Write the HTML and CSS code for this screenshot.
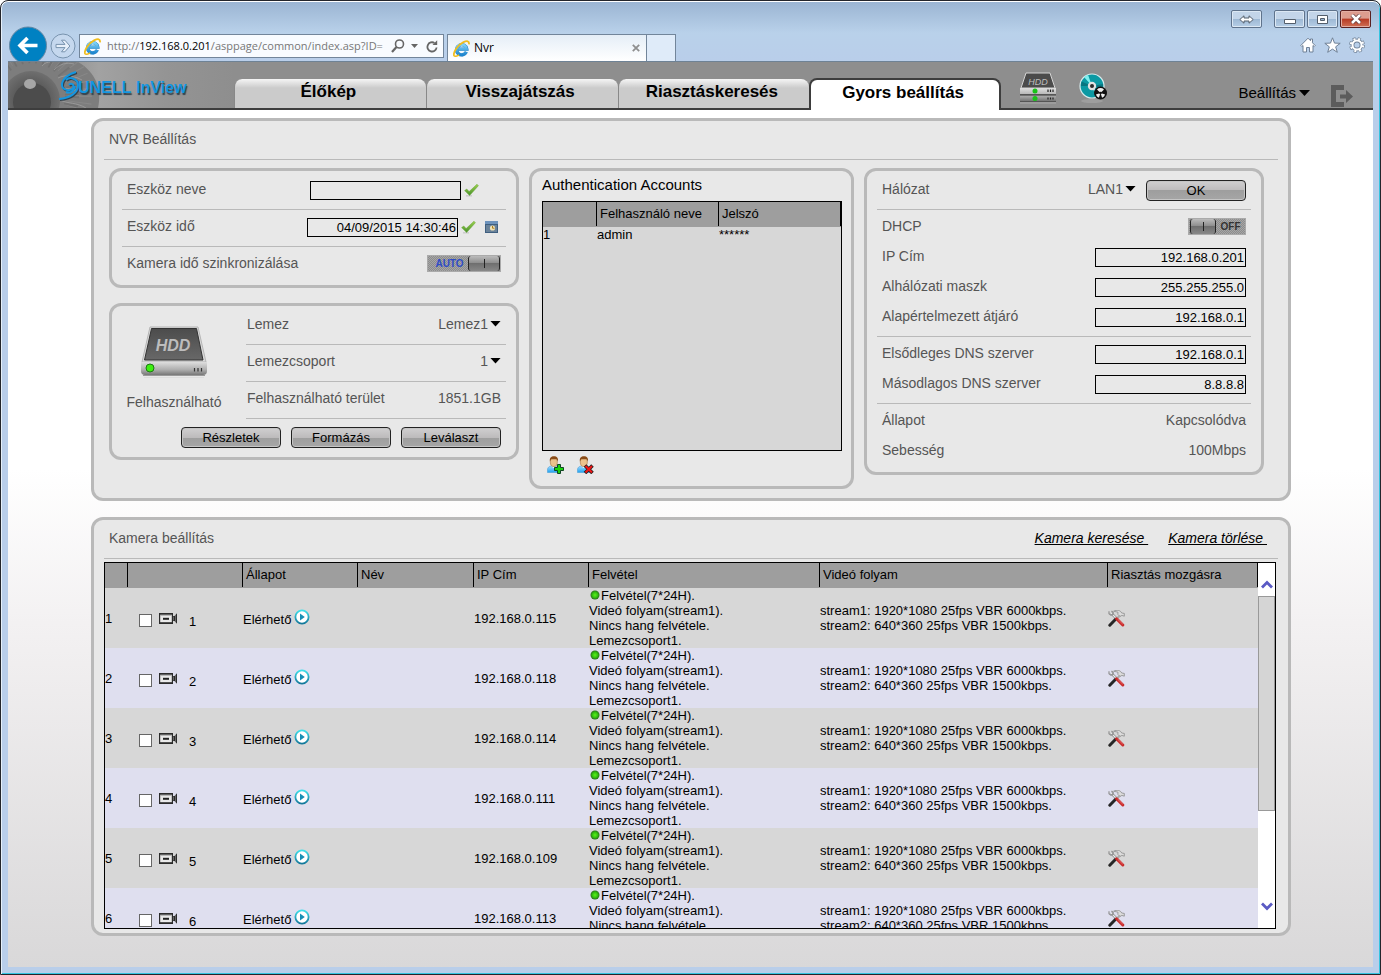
FILE: index.html
```html
<!DOCTYPE html>
<html lang="hu">
<head>
<meta charset="utf-8">
<title>Nvr</title>
<link rel="stylesheet" href="styles.css">
</head>
<body>
<svg class="defs" width="0" height="0" aria-hidden="true">
  <defs>
    <linearGradient id="g-metal" x1="0" y1="0" x2="0" y2="1"><stop offset="0" stop-color="#dedede"/><stop offset=".6" stop-color="#adadad"/><stop offset="1" stop-color="#777"/></linearGradient>
    <linearGradient id="g-plate" x1="0" y1="0" x2="0" y2="1"><stop offset="0" stop-color="#4c4c4c"/><stop offset="1" stop-color="#686868"/></linearGradient>
    <linearGradient id="g-check" x1="0" y1="0" x2="0" y2="1"><stop offset="0" stop-color="#9bd14c"/><stop offset="1" stop-color="#47912d"/></linearGradient>
    <linearGradient id="g-ie" x1="0" y1="0" x2="0" y2="1"><stop offset="0" stop-color="#7fd3f7"/><stop offset="1" stop-color="#1e86cf"/></linearGradient>
    <linearGradient id="g-play" x1="0" y1="0" x2="0" y2="1"><stop offset="0" stop-color="#3fe0ea"/><stop offset="1" stop-color="#14789a"/></linearGradient>
    <linearGradient id="g-body" x1="0" y1="0" x2="0" y2="1"><stop offset="0" stop-color="#a8dcff"/><stop offset="1" stop-color="#1fa2f0"/></linearGradient>
    <radialGradient id="g-led"><stop offset="0" stop-color="#5df01c"/><stop offset=".6" stop-color="#32c010"/><stop offset="1" stop-color="#2b6b1c"/></radialGradient>
    <radialGradient id="g-iris"><stop offset="0" stop-color="#555"/><stop offset=".6" stop-color="#5c5c5c"/><stop offset="1" stop-color="#6f6f6f"/></radialGradient>
    <linearGradient id="g-skin"><stop offset="0" stop-color="#727272"/><stop offset=".4" stop-color="#a2a2a2"/><stop offset=".7" stop-color="#949494"/><stop offset="1" stop-color="#8e8e8e"/></linearGradient>
  </defs>
  <symbol id="i-ie" viewBox="0 0 16 16">
    <path d="M12.600 11.200A4.800 4.800 0 1 1 13 8.600H5" fill="none" stroke="#2b86c6" stroke-width="3.200"/>
    <path d="M12.400 11.200A4.800 4.800 0 1 1 12.800 8.600H5" fill="none" stroke="url(#g-ie)" stroke-width="2.600"/>
    <path d="M1.200 15C-.6 12.500 4.500 4.500 9.500 2.200 13 .6 15.600.5 15 4.200" fill="none" stroke="#f0bd1e" stroke-width="1.700"/>
    <path d="M1.200 15c1 .8 3 0 4.600-1" fill="none" stroke="#f0bd1e" stroke-width="1.400"/>
  </symbol>
  <symbol id="i-check" viewBox="0 0 15 14">
    <path d="M2 12.800h6" stroke="#ccc" stroke-width="1.500"/>
    <path d="M.6 7.600 2.800 6l2.300 2.600L13 1.200l1.400 1.500L5.600 12.600z" fill="url(#g-check)" stroke="#6ba536" stroke-width=".5"/>
  </symbol>
  <symbol id="i-cam" viewBox="0 0 19 12">
    <path d="M0 0h14v3l1.500 0L18 .2v10.600L15.500 8H14v3H0z" fill="#2b2b2b"/>
    <path d="M1.200 1.800h11.600v7.400H1.200z" fill="#e9e9e9"/><path d="M1.200 1.800h11.600v1H1.200z" fill="#aaa"/>
    <path d="M4 4.800h6v2H4z" fill="#222"/><path d="M14.500 3.500v4M16.500 2v7" stroke="#777" stroke-width=".8"/>
  </symbol>
  <symbol id="i-play" viewBox="0 0 16 16">
    <circle cx="8" cy="8" r="6.600" fill="#fff" stroke="url(#g-play)" stroke-width="1.800"/>
    <path d="M6 4.500 10.800 8 6 11.500z" fill="#178fb5"/>
  </symbol>
  <symbol id="i-led" viewBox="0 0 10 10"><circle cx="5" cy="5" r="4.500" fill="url(#g-led)"/></symbol>
  <symbol id="i-tools" viewBox="0 0 17 17">
    <path d="M3.200 3.200 9 9" stroke="#888" stroke-width="2.600"/><path d="M3.200 3.200 9 9" stroke="#eee" stroke-width="1.200"/>
    <path d="M1 1.200v2.600L2.800 5.200 5 4.600 5.200 2.500 3.500 1" fill="none" stroke="#8b8b8b" stroke-width="1.100"/>
    <path d="M5.600 1.200C9-.4 12.500.2 13.700 3l2.600.4v2.800l-2.400-.8L12 6.500 9.800 4.300 10 2.200z" fill="#dcdcdc" stroke="#8b8b8b" stroke-width=".8"/>
    <path d="M12 5.500 8 9.500" stroke="#aaa" stroke-width="2.200"/>
    <path d="M7.600 9.300 1.800 15.200" stroke="#262626" stroke-width="3" stroke-linecap="round"/>
    <path d="M8.600 8.800 14.800 15" stroke="#c92b2b" stroke-width="3" stroke-linecap="round"/>
    <path d="M9.500 9 14.800 14.200" stroke="#f08a8a" stroke-width=".7"/>
  </symbol>
  <symbol id="i-person" viewBox="0 0 17 17">
    <path d="M.5 16.500v-3c0-2 1.800-3.300 4-3.600h4.500c2.200.3 4 1.600 4 3.600v3z" fill="url(#g-body)" stroke="#4a9fd8" stroke-width=".6"/>
    <path d="M4.500 10.500h4.500L6.800 12z" fill="#fff"/>
    <ellipse cx="6.800" cy="6" rx="3.500" ry="4.500" fill="#ecc28c" stroke="#a8733a" stroke-width=".6"/>
    <path d="M2.900 5.500C2.300 1.500 4.500.2 7 .3c2.800 0 4.500 1.500 3.900 5.200L9.700 3.300H4.200z" fill="#8a4c17"/>
  </symbol>
</svg>

<div class="window">
  <header class="chrome">
    <button class="nav-btn" type="button" aria-label="Vissza">
      <svg width="39" height="35" viewBox="0 0 39 35"><circle cx="20" cy="19.500" r="18.500" fill="#0081c2" stroke="#6688a4"/><path d="M29.500 19.500H13M19.500 12l-7.500 7.500 7.500 7.500" fill="none" stroke="#fff" stroke-width="3.600"/></svg>
    </button>
    <button class="nav-btn nav-next" type="button" aria-label="Előre">
      <svg width="28" height="35" viewBox="0 0 28 35"><circle cx="15" cy="20" r="12" fill="#c5d8ee" stroke="#7893ae"/><path d="M8 18.400h9l-3.500-4.200h3.400l5 5.800-5 5.800h-3.400l3.500-4.200H8z" fill="#e6eff9" stroke="#7893ae"/></svg>
    </button>
    <div class="address">
      <svg width="17" height="17"><use href="#i-ie"/></svg>
      <div class="url" role="textbox" contenteditable="true" spellcheck="false" aria-label="Cím">http://<b>192.168.0.201</b>/asppage/common/index.asp?ID=</div>
      <button class="plain" type="button" aria-label="Keresés"><svg width="14" height="14" viewBox="0 0 14 14"><circle cx="8.500" cy="5" r="4" fill="none" stroke="#666" stroke-width="1.600"/><path d="M5.500 8 1 13" stroke="#666" stroke-width="2.200"/></svg></button>
      <button class="plain" type="button" aria-label="Előzmények"><svg width="7" height="4" viewBox="0 0 7 4"><path d="M0 0h7L3.500 4z" fill="#666"/></svg></button>
      <button class="plain reload" type="button" aria-label="Frissítés"><svg width="12" height="13" viewBox="0 0 12 13"><path d="M10.600 7.500A4.600 4.600 0 1 1 8.500 3" fill="none" stroke="#666" stroke-width="1.800"/><path d="M6.500 5h4.700V.3z" fill="#666"/></svg></button>
    </div>
    <div class="browser-tab">
      <svg width="17" height="17"><use href="#i-ie"/></svg>
      <span class="browser-tab-name">Nvr</span>
      <button class="plain" type="button" aria-label="Lap bezárása"><svg width="8" height="8" viewBox="0 0 8 8"><path d="m.8.8 6.400 6.400M7.200.8.8 7.200" stroke="#8f8f8f" stroke-width="1.800"/></svg></button>
    </div>
    <button class="new-tab" type="button" aria-label="Új lap"></button>
    <div class="chrome-end">
      <div class="caption">
        <button class="cap cap-first" type="button" aria-label="Váltás"><svg width="15" height="9" viewBox="0 0 15 9"><path d="M5 .8.8 4.500 5 8.200V6h5v2.200l4.200-3.700L10 .8V3H5z" fill="#fff" stroke="#535e6b"/></svg></button>
        <button class="cap" type="button" aria-label="Kis méret"><svg width="12" height="9" viewBox="0 0 12 9"><path d="M.5 4.500h11v4H.5z" fill="#fff" stroke="#535e6b"/></svg></button>
        <button class="cap" type="button" aria-label="Teljes méret"><svg width="11" height="9" viewBox="0 0 11 9"><path d="M.5.5h10v8H.5z" fill="#fff" stroke="#535e6b"/><path d="M3.500 3.500h4v2h-4z" fill="#9ab4d0" stroke="#535e6b"/></svg></button>
        <button class="cap cap-close" type="button" aria-label="Bezárás"><svg width="12" height="10" viewBox="0 0 12 10"><path d="m2 1 8 8M10 1 2 9" stroke="#533" stroke-width="4"/><path d="m2 1 8 8M10 1 2 9" stroke="#fff" stroke-width="2.600"/></svg></button>
      </div>
      <div class="tools">
        <button class="plain" type="button" aria-label="Kezdőlap"><svg width="16" height="16" viewBox="0 0 16 16"><path d="M8 1.200.8 8.500l1 1L3 8.500V15h3.500v-4.500h3V15H13V8.500l1.200 1 1-1L12.500 5.800V2h-2v1.700z" fill="#fff" stroke="#6f8096"/></svg></button>
        <button class="plain" type="button" aria-label="Kedvencek"><svg width="17" height="16" viewBox="0 0 17 16"><path d="m8.500.8 2 5.300 5.700.2-4.500 3.500 1.600 5.500-4.800-3.200-4.800 3.200 1.600-5.500L.8 6.300l5.700-.2z" fill="#fff" stroke="#6f8096"/></svg></button>
        <button class="plain" type="button" aria-label="Eszközök"><svg width="16" height="16" viewBox="0 0 16 16"><circle cx="8" cy="8" r="6.300" fill="none" stroke="#6f8096" stroke-width="3.200" stroke-dasharray="2.900 2.048"/><circle cx="8" cy="8" r="4.500" fill="none" stroke="#6f8096" stroke-width="3.800"/><circle cx="8" cy="8" r="6" fill="none" stroke="#fff" stroke-width="2.400" stroke-dasharray="1.900 2.812" stroke-dashoffset="-.5"/><circle cx="8" cy="8" r="4.500" fill="none" stroke="#fff" stroke-width="2"/></svg></button>
      </div>
    </div>
  </header>

  <div class="page">
    <header class="app-bar">
      <svg class="brand" width="226" height="46" viewBox="0 0 226 46" role="img" aria-label="SUNELL InView">
        <rect width="226" height="46" fill="url(#g-skin)"/>
        <path d="M0 0h70c18 10 24 28 20 46H0z" fill="#7d7d7d"/>
        <circle cx="24" cy="34" r="48" fill="none" stroke="#8d8d8d" stroke-width="24" stroke-dasharray="1 5" opacity=".6"/>
        <circle cx="24" cy="34" r="40" fill="none" stroke="#6b6b6b" stroke-width="14" stroke-dasharray="2 6" opacity=".6"/>
        <path d="M46 8c6-6 12-8 20-6M50 16c8-4 16-2 24 2M54 26c8 0 14 4 24 2M52 38c8 4 16 2 26 8M34 4c2-3 6-4 8-4" fill="none" stroke="#a2a2a2" opacity=".7"/>
        <circle cx="23" cy="38" r="29" fill="url(#g-iris)"/>
        <circle cx="24" cy="40" r="19" fill="#4c4c4c"/>
        <ellipse cx="22" cy="22" rx="6" ry="5" fill="#a6a6a6"/>
        <g transform="translate(1 1)" fill="none" stroke="#31424e" stroke-width="2"><path d="M68 10c-8 2-14 7-14 13 0 5 8 7 11 3 2-3-2-6-4-3M51 37c11-1 19-6 19-14 0-6-8-9-12-5"/></g>
        <g fill="none" stroke="#1496e0" stroke-width="2"><path d="M68 10c-8 2-14 7-14 13 0 5 8 7 11 3 2-3-2-6-4-3M51 37c11-1 19-6 19-14 0-6-8-9-12-5M58 30c5 2 9-2 9-6"/></g>
        <g class="brand-text"><text x="70" y="31">UNELL</text><text x="128" y="31">InView</text></g>
      </svg>
      <nav class="tabs">
        <a class="tab" href="#">Élőkép</a>
        <a class="tab" href="#">Visszajátszás</a>
        <a class="tab" href="#">Riasztáskeresés</a>
        <a class="tab tab-active" href="#" aria-current="page">Gyors beállítás</a>
      </nav>
      <div class="bar-icons">
        <button class="plain" type="button" aria-label="HDD"><svg width="38" height="33" viewBox="0 0 38 33">
          <path d="M7 1h24l5 15H2z" fill="#4b4b4b" stroke="#d5d5d5"/>
          <text class="hdd-small" x="19" y="13" text-anchor="middle">HDD</text>
          <path d="M1 16h36v6H1zM1 24h36v5H1z" fill="url(#g-metal)"/><path d="M1 22h36v1.500H1zM1 29h36v1H1z" fill="#555"/><path d="M1 30h36v2H1z" fill="#aaa" opacity=".5"/>
          <circle cx="16" cy="19" r="2.500" fill="#19c319"/><circle cx="16" cy="26.500" r="2.500" fill="#19c319"/>
          <path d="M29 17.500v2.500M31.500 17.500v2.500M34 17.500v2.500M29 25.500v2M31.500 25.500v2M34 25.500v2" stroke="#222" stroke-width="1.200"/></svg></button>
        <button class="plain" type="button" aria-label="Lemezírás"><svg width="30" height="33" viewBox="0 0 30 33">
          <ellipse cx="13" cy="29" rx="11" ry="2" fill="#a8a8a8" opacity=".6"/>
          <circle cx="13" cy="14" r="12" fill="#0c99a3" stroke="#d8ecee" stroke-width="1.200"/>
          <path d="M13 14 5 5l4-2.300zM13 14l8 9-4 2.200z" fill="#7ff0ef"/><path d="M13 14 2.500 9.500 2 14zM13 14l11-2v4z" fill="#087580"/>
          <circle cx="13" cy="14" r="4.200" fill="#e2e2e2"/><circle cx="13" cy="14" r="2" fill="#2a2a2a"/>
          <circle cx="21.500" cy="21" r="6.500" fill="#111"/><path d="M21.500 21 18 17.500a5 5 0 0 1 7 0zM21.500 21l-4.600 1.500a5 5 0 0 0 3 3.200zM21.500 21l4.600 1.500a5 5 0 0 1-3 3.200z" fill="#eee"/><circle cx="21.500" cy="21" r="1.300" fill="#111"/></svg></button>
      </div>
      <button class="plain settings" type="button" aria-haspopup="menu">Beállítás<span class="caret"></span></button>
      <button class="plain exit" type="button" aria-label="Kilépés"><svg width="24" height="24" viewBox="0 0 24 24"><path d="M1 1h13v5H6v12h8v5H1z" fill="#5c5c5c"/><path d="M10 10.500h6V6l7 6.500-7 6.500v-4.500h-6z" fill="#5c5c5c"/></svg></button>
    </header>

    <main class="content">
      <section class="panel">
        <div class="panel-head"><h2>NVR Beállítás</h2></div>
        <div class="cards">
          <div class="stack">
            <form class="card">
              <div class="group"><div class="row"><label for="dev-name">Eszköz neve</label>
                <input class="field" id="dev-name" type="text">
                <button class="plain gap-end" type="button" aria-label="Név mentése"><svg width="15" height="14"><use href="#i-check"/></svg></button></div></div>
              <div class="group"><div class="row"><label for="dev-time">Eszköz idő</label>
                <input class="field" id="dev-time" type="text" value="04/09/2015 14:30:46">
                <button class="plain" type="button" aria-label="Idő mentése"><svg width="15" height="14"><use href="#i-check"/></svg></button>
                <button class="plain cal" type="button" aria-label="Naptár"><svg width="13" height="12" viewBox="0 0 13 12"><path d="M0 0h13v12H0z" fill="#3f5f80"/><path d="M0 0h13v3H0z" fill="#6d93bd"/><path d="M1 4h11v7H1z" fill="#6a8299"/><circle cx="7.500" cy="7" r="2.600" fill="#efe2b4"/><path d="M7.500 5v2.200h2" fill="none" stroke="#a87a20"/></svg></button></div></div>
              <div class="group"><div class="row"><span class="label" id="sync-label">Kamera idő szinkronizálása</span>
                <button class="switch" type="button" role="switch" aria-checked="true" aria-labelledby="sync-label"><span class="switch-text">AUTO</span><span class="knob"></span></button></div></div>
            </form>
            <form class="card disk">
              <div class="disk-state">
                <svg width="68" height="54" viewBox="0 0 68 54">
                  <path d="M2 36 10 1h48l8 35z" fill="#d9d9d9" stroke="#b5b5b5"/>
                  <path d="M11.500 2.500h45L63 34H4.500z" fill="url(#g-plate)" stroke="#333"/>
                  <text class="hdd-big" x="33" y="25" text-anchor="middle">HDD</text>
                  <path d="M1 36h66v9q0 4-4 4H5q-4 0-4-4z" fill="url(#g-metal)"/><path d="M3 49.500h62" stroke="#999"/><path d="M4 51.500h60" stroke="#ddd"/>
                  <circle cx="10" cy="42" r="4" fill="#3df010" stroke="#1c7a12"/>
                  <path d="M54.500 42v3.500M58 42v3.500M61.500 42v3.500" stroke="#333" stroke-width="1.200"/></svg>
                <span>Felhasználható</span>
              </div>
              <div class="disk-rows">
                <div class="group"><div class="row"><label for="disk">Lemez</label><span class="pick"><select id="disk"><option>Lemez1</option></select></span></div></div>
                <div class="group"><div class="row"><label for="disk-group">Lemezcsoport</label><span class="pick"><select id="disk-group"><option>1</option></select></span></div></div>
                <div class="group"><div class="row"><span class="label">Felhasználható terület</span><span class="value">1851.1GB</span></div></div>
              </div>
              <div class="disk-actions"><button class="btn" type="button">Részletek</button><button class="btn" type="button">Formázás</button><button class="btn" type="button">Leválaszt</button></div>
            </form>
          </div>

          <div class="card accounts">
            <h3 id="acc-title">Authentication Accounts</h3>
            <div class="acc-list">
              <table class="grid" aria-labelledby="acc-title">
                <colgroup><col class="c-acc-no"><col class="c-acc-user"><col></colgroup>
                <thead><tr><th></th><th>Felhasználó neve</th><th>Jelszó</th></tr></thead>
                <tbody><tr><td>1</td><td>admin</td><td>******</td></tr></tbody>
              </table>
            </div>
            <div class="acc-actions">
              <button class="plain" type="button" aria-label="Felhasználó hozzáadása"><svg width="17" height="18" viewBox="0 0 17 18"><use href="#i-person" width="17" height="17"/><path d="M10.500 8.500h3v3h3v3h-3v3h-3v-3h-3v-3h3z" fill="#19d40c" stroke="#142" stroke-width="1"/></svg></button>
              <button class="plain" type="button" aria-label="Felhasználó törlése"><svg width="17" height="18" viewBox="0 0 17 18"><use href="#i-person" width="17" height="17"/><path d="m8 9.500 7.500 7.500M15.500 9.500 8 17" stroke="#222" stroke-width="3.600"/><path d="m8.500 10 6.500 6.500M15 10l-6.500 6.500" stroke="#f21414" stroke-width="2"/></svg></button>
            </div>
          </div>

          <form class="card network">
            <div class="group"><div class="row"><label for="net">Hálózat</label><span class="pick"><select id="net"><option>LAN1</option></select></span><button class="btn" type="button">OK</button></div></div>
            <div class="group">
              <div class="row"><span class="label" id="dhcp-label">DHCP</span><button class="switch switch-off" type="button" role="switch" aria-checked="false" aria-labelledby="dhcp-label"><span class="knob"></span><span class="switch-text">OFF</span></button></div>
              <div class="row"><label for="ip">IP Cím</label><input class="field" id="ip" type="text" value="192.168.0.201"></div>
              <div class="row"><label for="mask">Alhálózati maszk</label><input class="field" id="mask" type="text" value="255.255.255.0"></div>
              <div class="row"><label for="gw">Alapértelmezett átjáró</label><input class="field" id="gw" type="text" value="192.168.0.1"></div>
            </div>
            <div class="group">
              <div class="row"><label for="dns1">Elsődleges DNS szerver</label><input class="field" id="dns1" type="text" value="192.168.0.1"></div>
              <div class="row"><label for="dns2">Másodlagos DNS szerver</label><input class="field" id="dns2" type="text" value="8.8.8.8"></div>
            </div>
            <div class="group">
              <div class="row"><span class="label">Állapot</span><span class="value">Kapcsolódva</span></div>
              <div class="row"><span class="label">Sebesség</span><span class="value">100Mbps</span></div>
            </div>
          </form>
        </div>
      </section>

      <section class="panel">
        <div class="panel-head"><h2>Kamera beállítás</h2>
          <div class="links"><a href="#">Kamera keresése&nbsp;</a><a href="#">Kamera törlése&nbsp;</a></div></div>
        <div class="cam-list">
          <table class="grid cams">
            <colgroup><col class="c-no"><col class="c-pick"><col class="c-state"><col class="c-name"><col class="c-ip"><col class="c-rec"><col class="c-stream"><col></colgroup>
            <thead><tr><th></th><th></th><th>Állapot</th><th>Név</th><th>IP Cím</th><th>Felvétel</th><th>Videó folyam</th><th>Riasztás mozgásra</th></tr></thead>
            <tbody>
              <tr><td>1</td><td><div class="cam"><input type="checkbox" id="c1"><svg width="19" height="12"><use href="#i-cam"/></svg><label for="c1">1</label></div></td><td><div class="state">Elérhető<svg width="16" height="16"><use href="#i-play"/></svg></div></td><td></td><td>192.168.0.115</td><td><svg class="led" width="10" height="10"><use href="#i-led"/></svg>Felvétel(7*24H).<br>Videó folyam(stream1).<br>Nincs hang felvétele.<br>Lemezcsoport1.</td><td>stream1: 1920*1080 25fps VBR 6000kbps.<br>stream2: 640*360 25fps VBR 1500kbps.</td><td><button class="plain" type="button" aria-label="Riasztás beállítása 1"><svg width="17" height="17"><use href="#i-tools"/></svg></button></td></tr>
              <tr><td>2</td><td><div class="cam"><input type="checkbox" id="c2"><svg width="19" height="12"><use href="#i-cam"/></svg><label for="c2">2</label></div></td><td><div class="state">Elérhető<svg width="16" height="16"><use href="#i-play"/></svg></div></td><td></td><td>192.168.0.118</td><td><svg class="led" width="10" height="10"><use href="#i-led"/></svg>Felvétel(7*24H).<br>Videó folyam(stream1).<br>Nincs hang felvétele.<br>Lemezcsoport1.</td><td>stream1: 1920*1080 25fps VBR 6000kbps.<br>stream2: 640*360 25fps VBR 1500kbps.</td><td><button class="plain" type="button" aria-label="Riasztás beállítása 2"><svg width="17" height="17"><use href="#i-tools"/></svg></button></td></tr>
              <tr><td>3</td><td><div class="cam"><input type="checkbox" id="c3"><svg width="19" height="12"><use href="#i-cam"/></svg><label for="c3">3</label></div></td><td><div class="state">Elérhető<svg width="16" height="16"><use href="#i-play"/></svg></div></td><td></td><td>192.168.0.114</td><td><svg class="led" width="10" height="10"><use href="#i-led"/></svg>Felvétel(7*24H).<br>Videó folyam(stream1).<br>Nincs hang felvétele.<br>Lemezcsoport1.</td><td>stream1: 1920*1080 25fps VBR 6000kbps.<br>stream2: 640*360 25fps VBR 1500kbps.</td><td><button class="plain" type="button" aria-label="Riasztás beállítása 3"><svg width="17" height="17"><use href="#i-tools"/></svg></button></td></tr>
              <tr><td>4</td><td><div class="cam"><input type="checkbox" id="c4"><svg width="19" height="12"><use href="#i-cam"/></svg><label for="c4">4</label></div></td><td><div class="state">Elérhető<svg width="16" height="16"><use href="#i-play"/></svg></div></td><td></td><td>192.168.0.111</td><td><svg class="led" width="10" height="10"><use href="#i-led"/></svg>Felvétel(7*24H).<br>Videó folyam(stream1).<br>Nincs hang felvétele.<br>Lemezcsoport1.</td><td>stream1: 1920*1080 25fps VBR 6000kbps.<br>stream2: 640*360 25fps VBR 1500kbps.</td><td><button class="plain" type="button" aria-label="Riasztás beállítása 4"><svg width="17" height="17"><use href="#i-tools"/></svg></button></td></tr>
              <tr><td>5</td><td><div class="cam"><input type="checkbox" id="c5"><svg width="19" height="12"><use href="#i-cam"/></svg><label for="c5">5</label></div></td><td><div class="state">Elérhető<svg width="16" height="16"><use href="#i-play"/></svg></div></td><td></td><td>192.168.0.109</td><td><svg class="led" width="10" height="10"><use href="#i-led"/></svg>Felvétel(7*24H).<br>Videó folyam(stream1).<br>Nincs hang felvétele.<br>Lemezcsoport1.</td><td>stream1: 1920*1080 25fps VBR 6000kbps.<br>stream2: 640*360 25fps VBR 1500kbps.</td><td><button class="plain" type="button" aria-label="Riasztás beállítása 5"><svg width="17" height="17"><use href="#i-tools"/></svg></button></td></tr>
              <tr><td>6</td><td><div class="cam"><input type="checkbox" id="c6"><svg width="19" height="12"><use href="#i-cam"/></svg><label for="c6">6</label></div></td><td><div class="state">Elérhető<svg width="16" height="16"><use href="#i-play"/></svg></div></td><td></td><td>192.168.0.113</td><td><svg class="led" width="10" height="10"><use href="#i-led"/></svg>Felvétel(7*24H).<br>Videó folyam(stream1).<br>Nincs hang felvétele.<br>Lemezcsoport1.</td><td>stream1: 1920*1080 25fps VBR 6000kbps.<br>stream2: 640*360 25fps VBR 1500kbps.</td><td><button class="plain" type="button" aria-label="Riasztás beállítása 6"><svg width="17" height="17"><use href="#i-tools"/></svg></button></td></tr>
            </tbody>
          </table>
          <div class="scrollbar">
            <button class="plain" type="button" aria-label="Fel"><svg width="12" height="9" viewBox="0 0 12 9"><path d="m1 7.500 5-5 5 5" fill="none" stroke="#5a5ac4" stroke-width="2.800"/></svg></button>
            <div class="track"><div class="thumb"></div></div>
            <button class="plain" type="button" aria-label="Le"><svg width="12" height="9" viewBox="0 0 12 9"><path d="m1 1.500 5 5 5-5" fill="none" stroke="#5a5ac4" stroke-width="2.800"/></svg></button>
          </div>
        </div>
      </section>
    </main>
  </div>
</div>
</body>
</html>
```
FILE: styles.css
```css
* { box-sizing: border-box; }

body {
  margin: 0;
  background: #fff;
  color: #000;
  font: 13px/15px "Liberation Sans", Arial, sans-serif;
}

button, input, select { font: inherit; color: inherit; }
svg { display: block; flex: none; }
h2, h3 { margin: 0; font-weight: normal; }
.defs { position: absolute; }

.plain {
  display: flex;
  flex: none;
  align-items: center;
  padding: 0;
  border: 0;
  background: none;
}

/* Browser window */
.window {
  display: flex;
  flex-direction: column;
  min-height: 100vh;
  padding: 0 7px 7px;
  border: 1px solid #23252b;
  border-radius: 8px 8px 0 0;
  background: linear-gradient(#9ab4d2, #b9d1ea 32px, #b9ceea 60px);
  box-shadow: inset 0 1px #fff, inset 1px 0 #e6f0fa, inset -1px -1px #35c4e0;
}

.chrome {
  display: flex;
  align-items: flex-end;
  height: 60px;
}

.nav-btn { flex: none; padding: 0; border: 0; background: none; }
.nav-next { margin-left: 1px; }

.address {
  display: flex;
  align-items: center;
  gap: 6px;
  flex: 0 0 365px;
  height: 24px;
  margin: 0 3px 3px;
  padding: 0 5px 0 4px;
  border: 1px solid #72859a;
  background: #f8fbff;
}

.url {
  flex: 1;
  color: #777;
  font: 11px/20px "Open Sans", "Noto Sans", sans-serif;
  white-space: nowrap;
}
.url b { color: #000; font-weight: normal; }
.reload { margin-left: 2px; }

.browser-tab {
  display: flex;
  align-items: center;
  gap: 4px;
  flex: 0 1 200px;
  height: 27px;
  padding: 0 6px 0 5px;
  border: 1px solid #72859a;
  border-bottom: 0;
  background: linear-gradient(#e5eef7, #fff);
}
.browser-tab-name { flex: 1; font: 12px/20px "Open Sans", "Noto Sans", sans-serif; }

.new-tab {
  flex: none;
  width: 29px;
  height: 27px;
  border: 1px solid #72859a;
  border-width: 1px 1px 0 0;
  background: #dfebf9;
}

.chrome-end {
  display: flex;
  flex: 1;
  flex-direction: column;
  align-items: flex-end;
  gap: 9px;
  padding: 0 2px 8px 0;
}
.caption { display: flex; gap: 2px; }
.cap {
  display: flex;
  align-items: center;
  justify-content: center;
  width: 31px;
  height: 18px;
  padding: 0;
  border: 1px solid #5f738c;
  border-radius: 2px;
  background: linear-gradient(#c3d5e9 50%, #9db8d4 50%, #b6cee6);
  box-shadow: inset 0 0 0 1px #dce8f4;
}
.cap-first { margin-right: 10px; }
.cap-close {
  border-color: #5a2020;
  background: linear-gradient(#dc9c8e 45%, #b73a24 50%, #cf7055);
  box-shadow: inset 0 0 0 1px #e3ada2;
}
.tools { display: flex; align-items: center; gap: 8px; padding-right: 6px; }

/* Application header */
.page {
  display: flex;
  flex: 1;
  flex-direction: column;
  border-top: 1px solid #6e8295;
  background: linear-gradient(#fff 45%, #f3f1f2 62%, #d9d8d9);
}

.app-bar {
  display: flex;
  align-items: flex-end;
  height: 48px;
  border-bottom: 2px solid #3d3d3d;
  background: #8e8e8e;
}

.brand-text {
  fill: #1496e0;
  font: bold 16px "Liberation Sans", Arial, sans-serif;
  text-shadow: 1px 2px 1px #31424e;
}

.tabs {
  display: flex;
  flex: 0 1 767px;
  align-items: flex-end;
  margin-bottom: -2px;
}
.tab {
  flex: 1 1 25%;
  height: 29px;
  margin-bottom: 2px;
  padding: 3px 4px 0 0;
  border-left: 1px solid #888;
  border-radius: 8px 8px 0 0;
  background: linear-gradient(#f5f5f5, #cbcbcb 9px);
  color: #000;
  font-weight: bold;
  font-size: 17px;
  line-height: 20px;
  text-align: center;
  text-decoration: none;
}
.tab-active {
  height: 32px;
  margin-bottom: 0;
  border: 2px solid #3d3d3d;
  border-bottom: 0;
  background: #fff;
}

.bar-icons { display: flex; gap: 22px; padding: 0 0 3px 18px; }

.settings {
  gap: 3px;
  margin: 0 20px 6px auto;
  font-size: 15px;
  line-height: 18px;
}
.exit { margin-right: 19px; }

.caret, .pick::after {
  flex: none;
  width: 11px;
  height: 6px;
  background: #000;
  clip-path: polygon(0 0, 100% 0, 50% 100%);
  content: "";
}

/* Panels */
.content {
  display: flex;
  flex-direction: column;
  gap: 16px;
  padding: 8px 82px 31px 83px;
}

.panel {
  padding: 0 10px;
  border: 3px solid #b9b9b9;
  border-radius: 12px;
  background: #e8e8e8;
}
.panel-head {
  display: flex;
  align-items: center;
  justify-content: space-between;
  height: 39px;
  padding: 0 11px 2px 5px;
  border-bottom: 1px solid #b9b9b9;
  color: #555;
  font-size: 14px;
  line-height: 16px;
}
.panel-head h2 { font-size: 14px; }
.links { display: flex; gap: 20px; }
.links a { color: #000; font-style: italic; }

.cards {
  display: grid;
  grid-template-columns: 410fr 325fr 400fr;
  gap: 10px;
  align-items: start;
  padding: 8px 14px 9px 5px;
}
.stack { display: grid; gap: 15px; }
.card {
  min-width: 0;
  padding: 2px 10px;
  border: 3px solid #b9b9b9;
  border-radius: 12px;
}

.group {
  padding: 2px 5px 4px;
  border-bottom: 1px solid #b9b9b9;
  color: #555;
  font-size: 14px;
}
.group:last-child { border-bottom: 0; }
.row { display: flex; align-items: center; height: 30px; }
.row > label, .label { flex: 1; }
.row > label, .label, .value, .pick { padding-bottom: 3px; line-height: 16px; }

.field {
  width: 151px;
  height: 19px;
  margin-right: 3px;
  padding: 0 1px;
  border: 1px solid #000;
  background: transparent;
  color: #000;
  font-size: 13px;
  text-align: right;
}
.network .field { margin-right: 0; }
.gap-end { margin-right: 22px; }
.cal { margin: 0 3px 0 9px; }

.pick { display: flex; align-items: center; gap: 2px; }
.pick select {
  padding: 0;
  border: 0;
  appearance: none;
  background: none;
  text-align: right;
}
.network .pick { margin-right: 10px; }

.btn {
  width: 100px;
  height: 21px;
  padding: 0;
  border: 1px solid #222;
  border-radius: 4px;
  background: linear-gradient(#d0cfd0, #bdbbbc 50%, #9e9e9e 50%, #a6a6a6);
  box-shadow: inset 0 0 0 1px #c5c5c5;
  color: #000;
  font-size: 13px;
}

.switch {
  display: flex;
  align-items: center;
  width: 74px;
  height: 17px;
  margin-bottom: 1px;
  padding: 0;
  border: 1px solid #aaa;
  background: repeating-conic-gradient(#8c8c8c 0 25%, #a6a6a6 0 50%) 0 0 / 2px 2px;
}
.switch-text {
  flex: 1;
  padding-left: 3px;
  color: #2f4cc6;
  font-weight: bold;
  font-size: 10px;
  line-height: 15px;
  text-align: center;
}
.knob {
  width: 32px;
  height: 15px;
  border: 1px solid #222;
  border-width: 0 1px;
  border-radius: 3px;
  background:
    linear-gradient(#222, #222) center / 1px 9px no-repeat,
    linear-gradient(#bbb, #8a8a8a 50%, #6f6f6f 50%, #888);
}
.switch-off { width: 58px; }
.switch-off .knob { width: 26px; margin-left: 1px; }
.switch-off .switch-text { padding: 0; color: #333; }

/* Disk card */
.disk {
  display: grid;
  grid-template-columns: 100px 1fr;
  column-gap: 24px;
  padding-bottom: 9px;
}
.disk-state {
  display: flex;
  flex-direction: column;
  align-items: center;
  gap: 14px;
  padding: 18px 0 0 4px;
  color: #555;
  font-size: 14px;
  line-height: 16px;
}
.disk-rows .group { padding-left: 1px; border-bottom: 1px solid #b9b9b9; }
.disk-actions {
  display: flex;
  grid-column: 1 / -1;
  justify-content: flex-end;
  gap: 10px;
  padding: 8px 5px 0 0;
}
.hdd-big { fill: #bdbdbd; font: italic bold 16px "Liberation Sans", Arial, sans-serif; }
.hdd-small { fill: #bdbdbd; font: italic 9px "Liberation Sans", Arial, sans-serif; }

/* Accounts card */
.accounts { padding: 5px 9px 12px 10px; }
.accounts h3 { font-size: 15px; line-height: 18px; }
.acc-list { height: 250px; margin-top: 7px; border: 1px solid #000; background: #d7d7d7; }
.acc-actions { display: flex; gap: 13px; padding: 5px 0 0 5px; }
.c-acc-no { width: 54px; }
.c-acc-user { width: 122px; }

/* Tables */
.grid { width: 100%; border-collapse: separate; border-spacing: 0; table-layout: fixed; }
.grid td { padding: 0; }
.grid th {
  height: 25px;
  padding: 0 3px 3px;
  background: linear-gradient(#000, #000) right top / 1px 24px no-repeat #9e9e9e;
  font-weight: normal;
  text-align: left;
}

/* Camera list */
.cam-list {
  display: flex;
  height: 367px;
  margin: 3px 2px 4px 0;
  overflow: hidden;
  border: 1px solid #000;
}
.cams { flex: 1; align-self: flex-start; min-width: 0; }
.cams td { height: 60px; background: #d7d7d7; }
.cams tr:nth-child(even) td { background: #dfdfef; }
.c-no { width: 23px; }
.c-pick, .c-state, .c-ip { width: 115px; }
.c-name { width: 116px; }
.c-rec { width: 231px; }
.c-stream { width: 288px; }
.cam { display: flex; align-items: center; gap: 7px; padding: 4px 0 0 11px; }
.cam svg { margin-bottom: 3px; }
.cam label { padding: 3px 0 0 4px; }
.cam input {
  width: 13px;
  height: 13px;
  margin: 0;
  border: 1px solid #666;
  appearance: none;
  background: #fff;
}
.state { display: flex; align-items: center; gap: 3px; padding-top: 2px; }
.state svg { margin-bottom: 5px; }
.led { display: inline-block; margin: 0 1px 0 1px; vertical-align: 0; }

.scrollbar {
  display: flex;
  flex: 0 0 17px;
  flex-direction: column;
  align-items: center;
  padding: 17px 0 17px;
  background: #fff;
}
.track { flex: 1; width: 100%; padding: 7px 0; }
.thumb { height: 72%; border: 1px solid #999; background: #d5d5d5; }
```
